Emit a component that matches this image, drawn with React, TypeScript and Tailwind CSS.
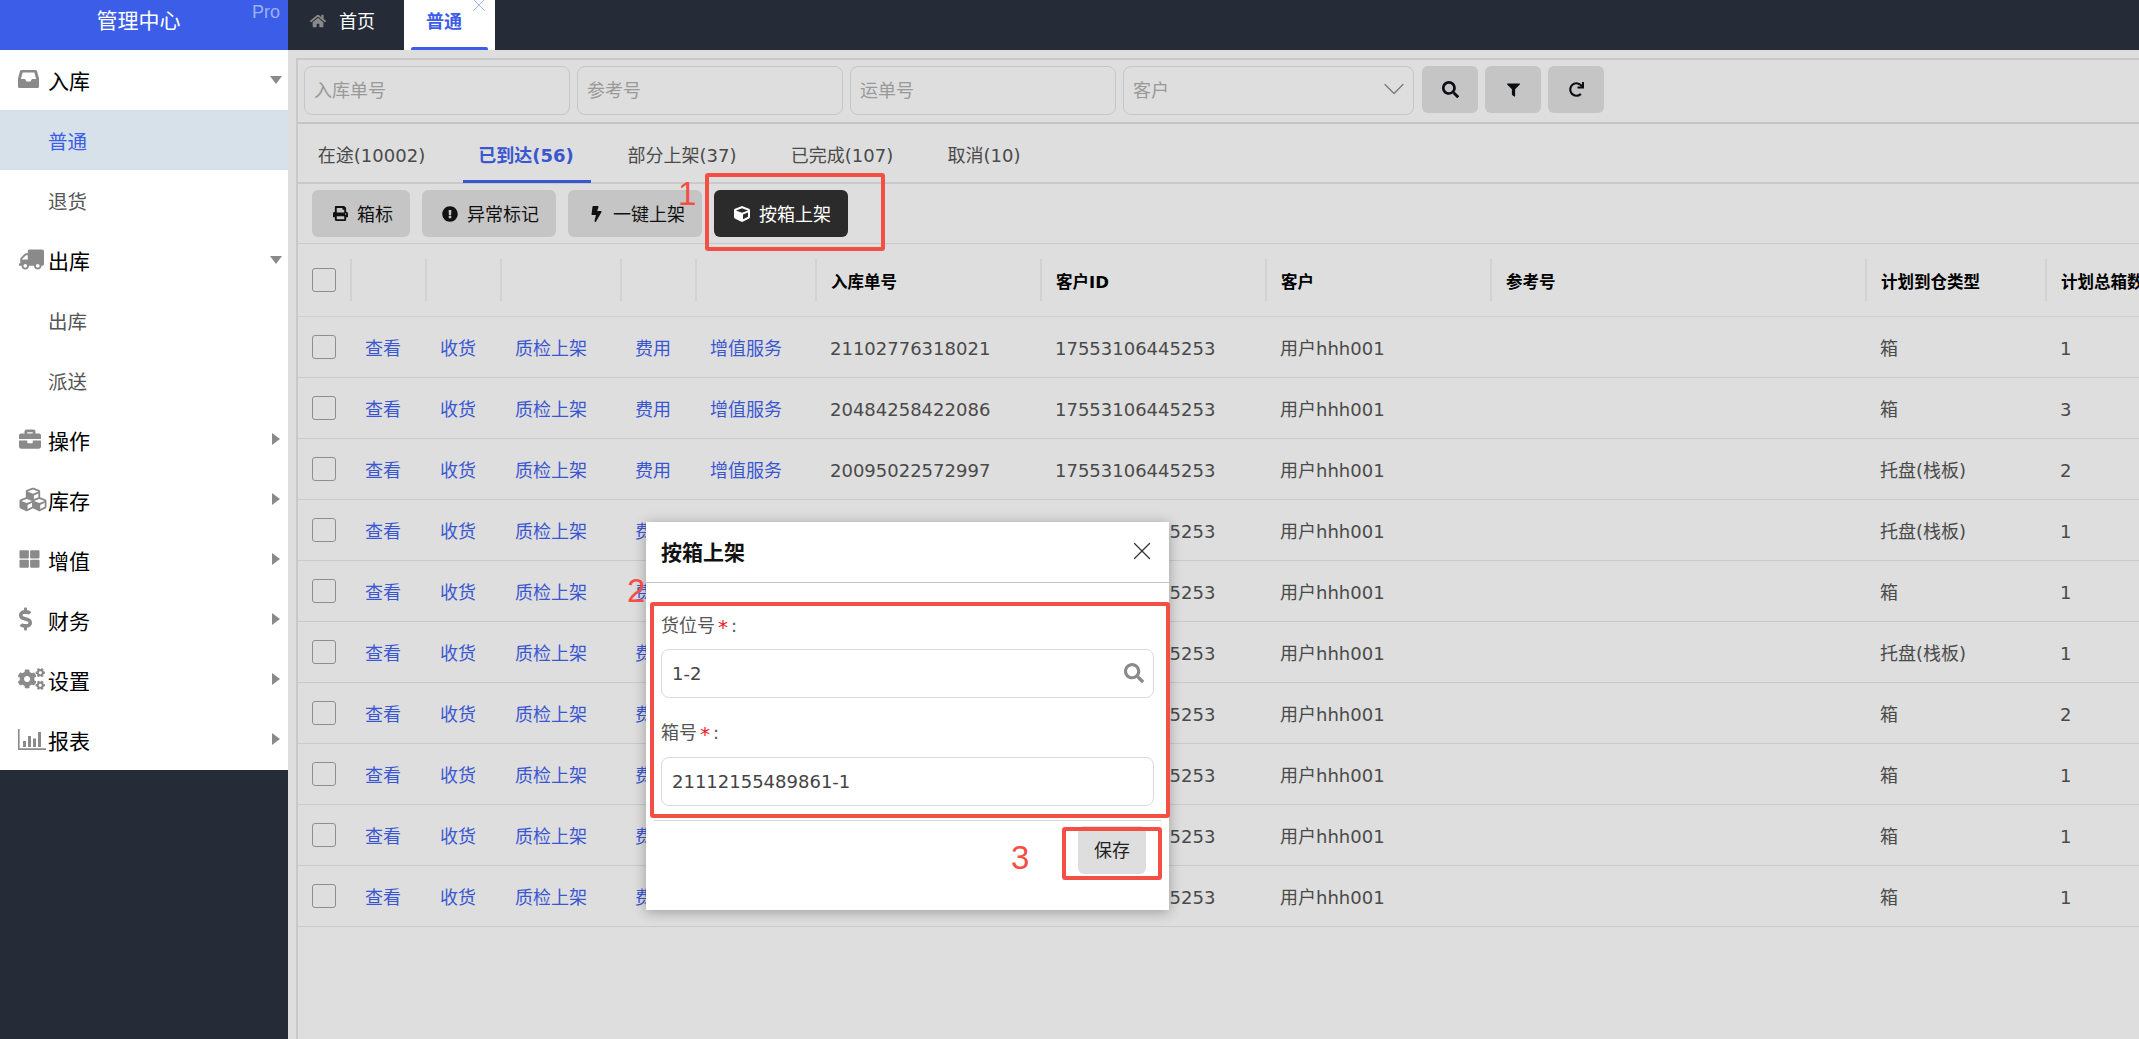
import React from "react";
import {
  FaTruck, FaBriefcase, FaCubes, FaThLarge, FaDollarSign, FaCogs,
  FaHome, FaPrint, FaExclamationCircle, FaBolt, FaCube, FaSearch, FaFilter, FaRedo,
} from "react-icons/fa";
import { X, ChevronDown } from "lucide-react";

function InboxIcon() {
  return (
    <svg viewBox="0 0 21 18" className="w-[21px] h-[18px] ml-[18px]" fill="currentColor">
      <path
        fillRule="evenodd"
        d="M3.5 0H17.5Q18.6 0 19 1L21 8.5V16.5Q21 18 19.5 18H1.5Q0 18 0 16.5V8.5L2 1Q2.4 0 3.5 0ZM4.6 2.4L2.9 9H7L8.6 11.6H12.4L14 9H18.1L16.4 2.4Z"
      />
    </svg>
  );
}

function BarsIcon() {
  return (
    <svg viewBox="0 0 28 21" className="w-[28px] h-[21px] ml-[18px]" fill="currentColor">
      <path d="M0 0H1.6V19.2H28V21H0Z" />
      <rect x="5" y="12" width="3" height="6" />
      <rect x="10" y="7" width="3" height="11" />
      <rect x="15" y="9.5" width="3" height="8.5" />
      <rect x="20" y="3" width="3" height="15" />
    </svg>
  );
}

const nav: { label: string; icon?: React.ReactNode; sub?: boolean; active?: boolean; open?: boolean }[] = [
  { label: "入库", icon: <InboxIcon />, open: true },
  { label: "普通", sub: true, active: true },
  { label: "退货", sub: true },
  { label: "出库", icon: <FaTruck className="w-[25px] h-[21px] ml-[19px] -scale-x-100" />, open: true },
  { label: "出库", sub: true },
  { label: "派送", sub: true },
  { label: "操作", icon: <FaBriefcase className="w-[24px] h-[22px] ml-[18px]" /> },
  { label: "库存", icon: <FaCubes className="w-[30px] h-[27px] ml-[18px]" /> },
  { label: "增值", icon: <FaThLarge className="w-[23px] h-[20px] ml-[18px]" /> },
  { label: "财务", icon: <FaDollarSign className="w-[13px] h-[24px] ml-[19px]" /> },
  { label: "设置", icon: <FaCogs className="w-[27px] h-[24px] ml-[18px]" /> },
  { label: "报表", icon: <BarsIcon /> },
];

const rows: [string, string, string][] = [
  ["21102776318021", "箱", "1"],
  ["20484258422086", "箱", "3"],
  ["20095022572997", "托盘(栈板)", "2"],
  ["19874421036652", "托盘(栈板)", "1"],
  ["19652207431185", "箱", "1"],
  ["19420035817764", "托盘(栈板)", "1"],
  ["19236641270093", "箱", "2"],
  ["19018853326410", "箱", "1"],
  ["18895120447736", "箱", "1"],
  ["18670394152208", "箱", "1"],
];

const headers = ["", "", "", "", "", "入库单号", "客户ID", "客户", "参考号", "计划到仓类型", "计划总箱数"];
const gridCols = "grid grid-cols-[52px_75px_75px_120px_75px_120px_225px_225px_225px_375px_180px_200px]";

function Checkbox() {
  return <span className="block w-[24px] h-[24px] rounded-[3px] border border-[#8e8e8e]" />;
}

function FilterInput({ placeholder }: { placeholder: string }) {
  return (
    <input
      readOnly
      placeholder={placeholder}
      className="w-[266px] h-[49px] rounded-[8px] border border-[#c6c6c6] bg-transparent px-[9px] text-[18px] placeholder:text-[#999999] outline-none"
    />
  );
}

function IconButton({ children }: { children: React.ReactNode }) {
  return (
    <button className="w-[56px] h-[47px] rounded-[6px] bg-[#c5c5c5] text-[#0c0c14] flex items-center justify-center">
      {children}
    </button>
  );
}

function ActionButton({ icon, label, dark, w }: { icon: React.ReactNode; label: string; dark?: boolean; w: string }) {
  return (
    <button
      className={`${w} h-[47px] rounded-[6px] flex items-center pl-[16px] text-[18px] ${dark ? "bg-[#2b2b2b] text-white" : "bg-[#c5c5c5] text-[#111111]"}`}
    >
      <span className="w-[24px] mr-[5px] flex justify-center shrink-0">{icon}</span>
      <span className="pt-[2px]">{label}</span>
    </button>
  );
}

export default function App() {
  const tabs = [
    { label: "在途(10002)", cls: "w-[139px] border-transparent" },
    { label: "已到达(56)", cls: "w-[128px] ml-[21px] font-bold text-[#3a57d1] border-[#3a57d1]" },
    { label: "部分上架(37)", cls: "w-[140px] ml-[22px] border-transparent" },
    { label: "已完成(107)", cls: "w-[134px] ml-[23px] border-transparent" },
    { label: "取消(10)", cls: "w-[108px] ml-[21px] border-transparent" },
  ];

  return (
    <div className="relative flex h-[1039px] w-full overflow-hidden bg-[#dedede] text-[18px] text-[#4a4a4a] [font-family:'DejaVu_Sans','Noto_Sans_CJK_SC',sans-serif]">
      <aside className="w-[288px] shrink-0 flex flex-col bg-[#252b37]">
        <div className="relative h-[50px] bg-[#3b5de7] flex items-center justify-center pr-[11px] pb-[6px] text-white text-[21px]">
          管理中心
          <span className="absolute right-[8px] top-[-1px] text-[18px] text-[#9db0f2] [font-family:'Liberation_Sans',sans-serif]">Pro</span>
        </div>
        <nav className="bg-white">
          {nav.map((n, i) => (
            <div
              key={i}
              className={`relative h-[60px] flex items-center ${n.active ? "bg-[#d6e1ea] text-[#3b5de7]" : n.sub ? "text-[#555555]" : "text-black"} ${n.sub ? "text-[19.5px]" : "text-[21px]"}`}
            >
              {n.icon && (
                <span className="absolute left-0 top-[17px] h-[24px] flex items-center text-[#8a8a8a]">{n.icon}</span>
              )}
              <span className="ml-[48px] pt-[6px]">{n.label}</span>
              {!n.sub &&
                (n.open ? (
                  <span className="absolute left-[270px] top-[26px] w-0 h-0 border-x-[6.5px] border-x-transparent border-t-[8px] border-t-[#8a8a8a]" />
                ) : (
                  <span className="absolute left-[272px] top-[23px] w-0 h-0 border-y-[6.5px] border-y-transparent border-l-[8px] border-l-[#8a8a8a]" />
                ))}
            </div>
          ))}
        </nav>
      </aside>

      <div className="flex-1 min-w-0 flex flex-col">
        <header className="h-[50px] shrink-0 bg-[#252b37] flex pl-[22px]">
          <div className="w-[94px] flex items-center pb-[8px] text-white">
            <FaHome className="w-[16px] h-[16px] text-[#8a8a8a] mr-[13px]" />
            <span>首页</span>
          </div>
          <div className="relative w-[91px] bg-white flex items-center pl-[22px] pb-[8px] font-bold text-[#3b5de7]">
            普通
            <X className="absolute left-[64px] top-[-6px] w-[22px] h-[22px] text-[#9db0ee]" strokeWidth={1} />
            <span className="absolute left-[7px] bottom-0 w-[77px] h-[3px] rounded-t-[2px] bg-[#3b5de7]" />
          </div>
        </header>

        <main className="flex-1 min-h-0 pl-[8px] pt-[8px]">
          <div className="h-full border-l-2 border-t-2 border-[#c9c9c9] overflow-hidden">
            <div className="h-[64px] pt-[6px] pl-[6px] flex gap-[7px] border-b-[2px] border-[#c4c4c4]">
              <FilterInput placeholder="入库单号" />
              <FilterInput placeholder="参考号" />
              <FilterInput placeholder="运单号" />
              <div className="relative w-[291px] h-[49px] rounded-[8px] border border-[#c6c6c6] flex items-center pl-[9px] text-[#999999]">
                客户
                <ChevronDown className="absolute right-[1px] top-[4px] w-[36px] h-[36px] text-[#777777]" strokeWidth={0.8} />
              </div>
              <div className="flex gap-[7px] ml-[1px]">
                <IconButton><FaSearch className="w-[17px] h-[17px]" /></IconButton>
                <IconButton><FaFilter className="w-[13px] h-[14px]" /></IconButton>
                <IconButton><FaRedo className="w-[15px] h-[15px]" /></IconButton>
              </div>
            </div>

            <div className="h-[60px] flex pl-[5px] border-b-[2px] border-[#c9c9c9]">
              {tabs.map((t) => (
                <div key={t.label} className={`h-[59px] pt-[6px] pr-[2px] shrink-0 border-b-[3px] flex items-center justify-center whitespace-nowrap ${t.cls}`}>
                  {t.label}
                </div>
              ))}
            </div>

            <div className="h-[60px] pt-[6px] pl-[14px] flex gap-[12px] border-b border-[#c9c9c9]">
              <ActionButton w="w-[98px]" icon={<FaPrint className="w-[15px] h-[15px]" />} label="箱标" />
              <ActionButton w="w-[134px]" icon={<FaExclamationCircle className="w-[16px] h-[16px]" />} label="异常标记" />
              <ActionButton w="w-[134px]" icon={<FaBolt className="w-[13px] h-[16px]" />} label="一键上架" />
              <ActionButton w="w-[134px]" dark icon={<FaCube className="w-[16px] h-[16px]" />} label="按箱上架" />
            </div>

            <div className={`${gridCols} h-[73px] border-b border-[#cfcfcf] items-center`}>
              <div className="pl-[14px]"><Checkbox /></div>
              {headers.map((h, i) => (
                <div key={i} className="h-[42px] border-l-2 border-[#d2d2d2] pl-[14px] pt-[6px] flex items-center font-bold text-[16.5px] text-black whitespace-nowrap overflow-hidden">
                  {h}
                </div>
              ))}
            </div>

            {rows.map((r) => (
              <div key={r[0]} className={`${gridCols} h-[61px] border-b border-[#cacaca] items-center whitespace-nowrap`}>
                <div className="pl-[14px]"><Checkbox /></div>
                {["查看", "收货", "质检上架", "费用", "增值服务"].map((a) => (
                  <div key={a} className="pl-[15px] pt-[3px] text-[#3a57d1]">{a}</div>
                ))}
                <div className="pl-[15px] pt-[3px]">{r[0]}</div>
                <div className="pl-[15px] pt-[3px]">17553106445253</div>
                <div className="pl-[15px] pt-[3px]">用户hhh001</div>
                <div />
                <div className="pl-[15px] pt-[3px]">{r[1]}</div>
                <div className="pl-[15px] pt-[3px]">{r[2]}</div>
              </div>
            ))}
          </div>
        </main>
      </div>

      {/* dialog */}
      <div className="absolute left-[646px] top-[522px] w-[523px] h-[388px] bg-white shadow-[0_2px_12px_rgba(0,0,0,0.3)] flex flex-col">
        <div className="h-[61px] shrink-0 border-b border-[#c4c4c4] flex items-center justify-between pl-[15px] pr-[12px]">
          <span className="font-bold text-[21px] text-[#111111] pt-[3px]">按箱上架</span>
          <X className="w-[30px] h-[30px] text-[#333333] mb-[2px]" strokeWidth={1} />
        </div>
        <div className="px-[15px] pt-[29px] text-[#555555]">
          <div className="h-[26px] flex items-center">货位号<span className="text-[#f01818] mx-[3px] pt-[4px] text-[20px]">*</span>:</div>
          <div className="relative mt-[11px] h-[49px] rounded-[8px] border border-[#dadada] flex items-center pl-[10px] text-[#444444]">
            1-2
            <FaSearch className="absolute right-[9px] top-[13px] w-[20px] h-[20px] text-[#8a8a8a]" />
          </div>
          <div className="h-[26px] mt-[21px] flex items-center">箱号<span className="text-[#f01818] mx-[3px] pt-[4px] text-[20px]">*</span>:</div>
          <div className="mt-[12px] h-[49px] rounded-[8px] border border-[#dadada] flex items-center pl-[10px] text-[#444444]">
            21112155489861-1
          </div>
        </div>
        <div className="mx-[8px] mt-[14px] border-t border-[#d8d8d8] flex justify-end pr-[15px] pt-[5px]">
          <button className="w-[68px] h-[48px] rounded-[6px] bg-[#dedede] text-[#222222] text-[18px]">保存</button>
        </div>
      </div>

      {/* annotations */}
      <div className="absolute left-[705px] top-[173px] w-[180px] h-[78px] rounded-[3px] border-[4px] border-[#f44f45]" />
      <div className="absolute left-[650px] top-[602px] w-[520px] h-[216px] rounded-[3px] border-[4px] border-[#f44f45]" />
      <div className="absolute left-[1062px] top-[827px] w-[100px] h-[53px] rounded-[3px] border-[4px] border-[#f44f45]" />
      <span className="absolute left-[678px] top-[175px] text-[33px] leading-[38px] text-[#f44f45] [font-family:'Liberation_Sans',sans-serif]">1</span>
      <span className="absolute left-[627px] top-[572px] text-[33px] leading-[38px] text-[#f44f45] [font-family:'Liberation_Sans',sans-serif]">2</span>
      <span className="absolute left-[1011px] top-[839px] text-[33px] leading-[38px] text-[#f44f45] [font-family:'Liberation_Sans',sans-serif]">3</span>
    </div>
  );
}
